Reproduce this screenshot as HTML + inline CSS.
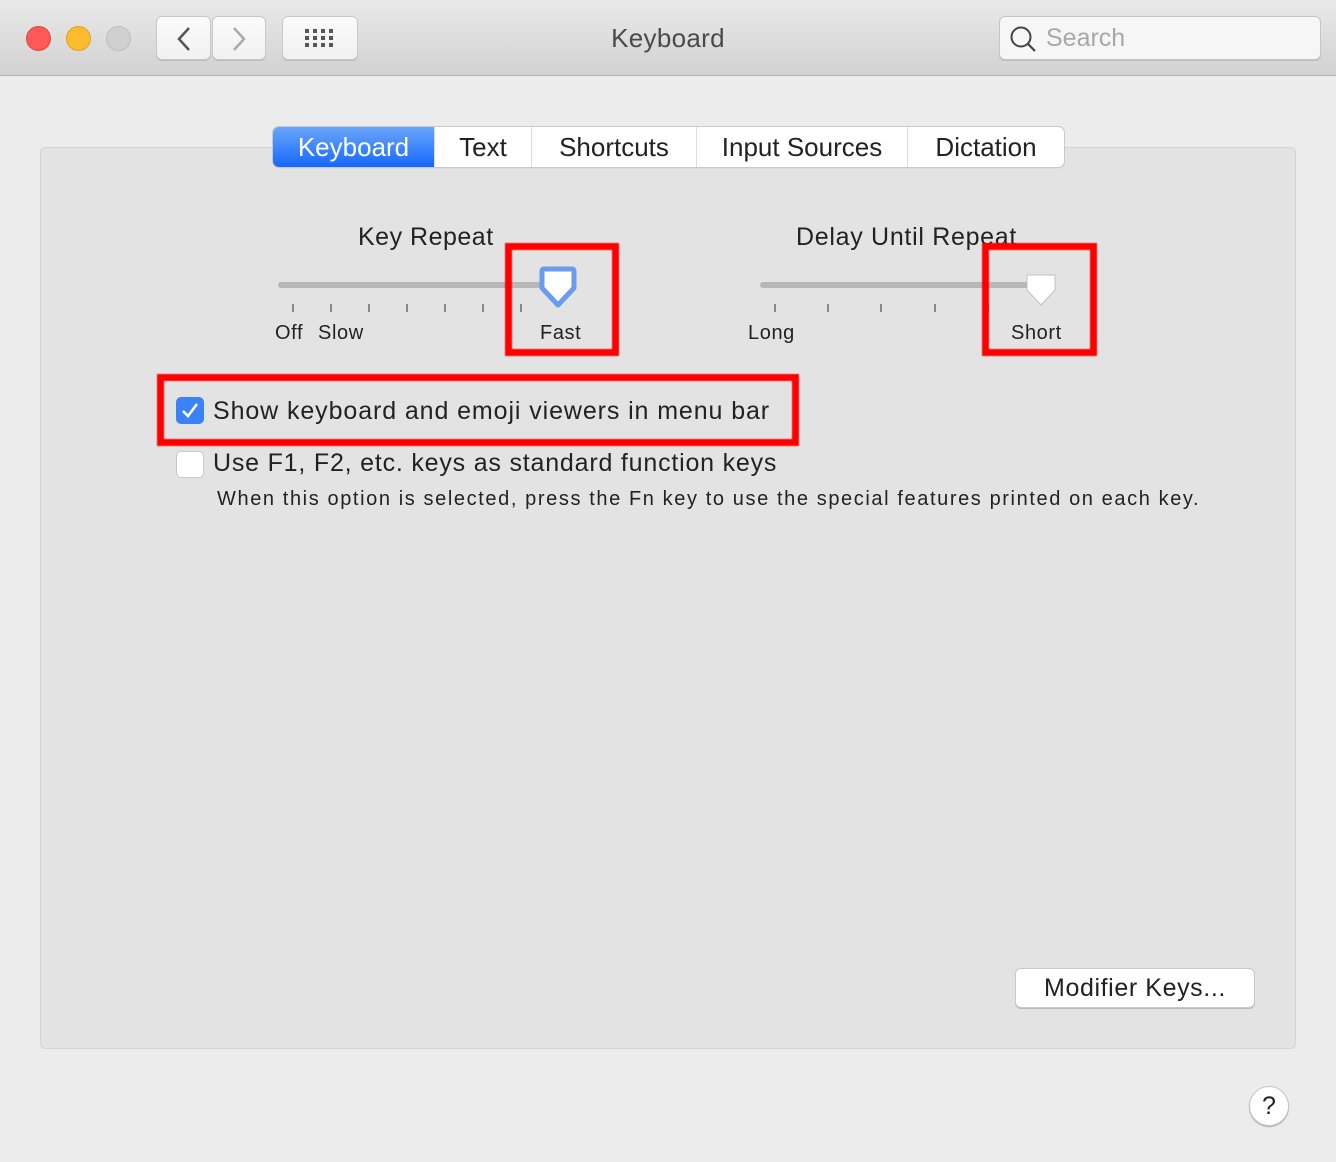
<!DOCTYPE html>
<html><head><meta charset="utf-8"><style>
*{box-sizing:border-box;margin:0;padding:0}
body{width:1336px;height:1162px;background:#ececec;font-family:"Liberation Sans",sans-serif;color:#222;position:relative;overflow:hidden}
.a{position:absolute}
.tb{left:0;top:0;width:1336px;height:76px;background:linear-gradient(#e9e9e9,#d2d2d2);border-bottom:1px solid #b2b2b2}
.dot{width:25px;height:25px;border-radius:50%;top:26px}
.btn{background:linear-gradient(#fbfbfb,#f1f1f1);border:1px solid #c8c8c8;border-radius:6px;box-shadow:0 1px 0 #bbb}
.panel{left:40px;top:147px;width:1256px;height:902px;background:#e3e3e3;border:1px solid #d4d4d4;border-radius:5px}
.tabs{left:273px;top:127px;height:40px;display:flex;border-radius:6px;box-shadow:0 0 0 1px #c9c9c9,0 1px 1px #aaa;background:#fff;overflow:hidden}
.tab{font-size:26px;line-height:40px;padding:0;text-align:center;border-right:1px solid #ddd;color:#222}
.lbl{font-size:25px;color:#222}
.sm{font-size:20px;color:#222;letter-spacing:0.6px}
.tick{width:2px;height:8px;background:#8a8a8a;top:304px}
.track{height:6px;border-radius:3px;background:#b7b7b7;top:282px}
.red{border:7px solid #f00;filter:blur(0.6px)}
</style></head><body>
<div class="a tb"></div>
<div class="a dot" style="left:26px;background:#fd5a55;border:1px solid #e0443e"></div>
<div class="a dot" style="left:66px;background:#fdbc2e;border:1px solid #dea126"></div>
<div class="a dot" style="left:106px;background:#d0d0d0;border:1px solid #bdbdbd"></div>
<div class="a btn" style="left:156px;top:16px;width:55px;height:44px"></div>
<div class="a btn" style="left:212px;top:16px;width:54px;height:44px"></div>
<svg class="a" style="left:170px;top:24px" width="30" height="30"><path d="M19 4 L9 15 L19 26" stroke="#555" stroke-width="2.5" fill="none"/></svg>
<svg class="a" style="left:225px;top:24px" width="30" height="30"><path d="M9 4 L19 15 L9 26" stroke="#aaa" stroke-width="2.5" fill="none"/></svg>
<div class="a btn" style="left:282px;top:16px;width:76px;height:44px"></div>
<svg class="a" style="left:304px;top:28px" width="32" height="22" fill="#555">
<rect x="1" y="1" width="4" height="4"/><rect x="9" y="1" width="4" height="4"/><rect x="17" y="1" width="4" height="4"/><rect x="25" y="1" width="4" height="4"/>
<rect x="1" y="8" width="4" height="4"/><rect x="9" y="8" width="4" height="4"/><rect x="17" y="8" width="4" height="4"/><rect x="25" y="8" width="4" height="4"/>
<rect x="1" y="15" width="4" height="4"/><rect x="9" y="15" width="4" height="4"/><rect x="17" y="15" width="4" height="4"/><rect x="25" y="15" width="4" height="4"/></svg>
<div class="a" style="left:0;width:1336px;top:23px;text-align:center;font-size:26px;color:#4a4a4a;letter-spacing:0.3px">Keyboard</div>
<div class="a" style="left:999px;top:16px;width:322px;height:44px;background:#f6f6f6;border:1px solid #c6c6c6;border-radius:6px;box-shadow:0 1px 0 #bbb"></div>
<svg class="a" style="left:1009px;top:25px" width="30" height="30"><circle cx="12" cy="12" r="9.5" stroke="#444" stroke-width="2" fill="none"/><path d="M19 19 L26 26" stroke="#444" stroke-width="2.2"/></svg>
<div class="a" style="left:1046px;top:24px;font-size:25px;color:#a8a8a8">Search</div>

<div class="a panel"></div>
<div class="a tabs">
<div class="tab" style="width:162px;background:linear-gradient(#6aa6fb,#1668fb);color:#fff">Keyboard</div>
<div class="tab" style="width:97px">Text</div>
<div class="tab" style="width:165px">Shortcuts</div>
<div class="tab" style="width:211px">Input Sources</div>
<div class="tab" style="width:156px;border:none">Dictation</div>
</div>

<div class="a lbl" style="left:358px;top:223px;letter-spacing:0.5px">Key Repeat</div>
<div class="a track" style="left:278px;width:285px"></div>
<div class="a tick" style="left:292px"></div><div class="a tick" style="left:330px"></div><div class="a tick" style="left:368px"></div><div class="a tick" style="left:406px"></div><div class="a tick" style="left:444px"></div><div class="a tick" style="left:482px"></div><div class="a tick" style="left:520px"></div>
<svg class="a" style="left:535px;top:265px" width="48" height="50"><path d="M7 6 Q7 4 9 4 L37 4 Q39 4 39 6 L39 23 L23 40 L7 23 Z" fill="#fff" stroke="#6b9bec" stroke-width="5" stroke-linejoin="round"/></svg>
<div class="a sm" style="left:275px;top:322px">Off</div>
<div class="a sm" style="left:318px;top:322px">Slow</div>
<div class="a sm" style="left:540px;top:322px">Fast</div>

<div class="a lbl" style="left:796px;top:223px;letter-spacing:0.7px">Delay Until Repeat</div>
<div class="a track" style="left:760px;width:285px"></div>
<div class="a tick" style="left:774px"></div><div class="a tick" style="left:827px"></div><div class="a tick" style="left:880px"></div><div class="a tick" style="left:934px"></div><div class="a tick" style="left:987px"></div>
<svg class="a" style="left:1024px;top:272px" width="36" height="42"><path d="M3 3 L31 3 L31 18 L17 33 L3 18 Z" fill="#fff" stroke="#c2c2c2" stroke-width="1" stroke-linejoin="round"/></svg>
<div class="a sm" style="left:748px;top:322px">Long</div>
<div class="a sm" style="left:1011px;top:322px">Short</div>

<div class="a" style="left:176px;top:397px;width:28px;height:27px;border-radius:5px;background:#3b82f6"></div>
<svg class="a" style="left:176px;top:397px" width="28" height="27"><path d="M7 14 L12 19 L21 7" stroke="#fff" stroke-width="2.6" fill="none"/></svg>
<div class="a lbl" style="left:213px;top:397px;letter-spacing:0.9px">Show keyboard and emoji viewers in menu bar</div>
<div class="a" style="left:176px;top:451px;width:28px;height:27px;border-radius:5px;background:#fff;border:1px solid #c9c9c9"></div>
<div class="a lbl" style="left:213px;top:449px;letter-spacing:0.8px">Use F1, F2, etc. keys as standard function keys</div>
<div class="a sm" style="left:217px;top:488px;letter-spacing:1.6px">When this option is selected, press the Fn key to use the special features printed on each key.</div>

<div class="a red" style="left:505px;top:243px;width:114px;height:113px"></div>
<div class="a red" style="left:982px;top:243px;width:115px;height:113px"></div>
<div class="a red" style="left:157px;top:374px;width:642px;height:72px"></div>

<div class="a btn" style="left:1015px;top:968px;width:240px;height:40px;background:#fff"></div>
<div class="a lbl" style="left:1015px;top:974px;width:240px;text-align:center;letter-spacing:0.6px">Modifier Keys...</div>
<div class="a" style="left:1249px;top:1086px;width:40px;height:40px;border-radius:50%;background:#fff;border:1px solid #c6c6c6;box-shadow:0 1px 1px #aaa;text-align:center;font-size:25px;line-height:38px">?</div>
</body></html>
